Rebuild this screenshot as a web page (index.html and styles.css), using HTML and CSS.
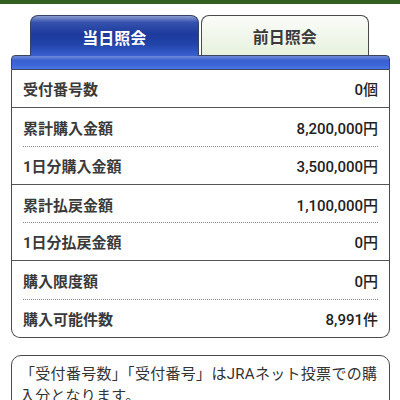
FILE: index.html
```html
<!DOCTYPE html>
<html lang="ja">
<head>
<meta charset="utf-8">
<link rel="stylesheet" href="styles.css">
</head>
<body>
<div class="topbar"></div>
<div class="page">
  <div class="tabs">
    <div class="tab active">当日照会</div>
    <div class="tab">前日照会</div>
  </div>
  <div class="bar"></div>
  <div class="table">
    <div class="row solid"><span class="label">受付番号数</span><span class="value">0個</span></div>
    <div class="row dotted"><span class="label">累計購入金額</span><span class="value">8,200,000円</span></div>
    <div class="row solid"><span class="label">1日分購入金額</span><span class="value">3,500,000円</span></div>
    <div class="row dotted"><span class="label">累計払戻金額</span><span class="value">1,100,000円</span></div>
    <div class="row solid"><span class="label">1日分払戻金額</span><span class="value">0円</span></div>
    <div class="row dotted"><span class="label">購入限度額</span><span class="value">0円</span></div>
    <div class="row"><span class="label">購入可能件数</span><span class="value">8,991件</span></div>
  </div>
  <div class="notice">「受付番号数」「受付番号」はJRAネット投票での購入分となります。</div>
</div>
</body>
</html>
```
FILE: styles.css
```css
html, body {
  margin: 0;
  padding: 0;
  background: #ffffff;
  font-family: Roboto, "Noto Sans CJK JP", sans-serif;
  color: #333;
}
.topbar {
  height: 4px;
  background: #335f22;
}
.page {
  padding: 0 10px 0 11px;
}
.tabs {
  display: flex;
  gap: 2px;
  padding: 0 21px 0 19px;
  margin-top: 11px;
  align-items: flex-end;
}
.tab {
  flex: 1;
  height: 40px;
  box-sizing: border-box;
  border: 1px solid #4a4a4a;
  border-bottom: none;
  border-radius: 8px 8px 0 0;
  display: flex;
  align-items: center;
  justify-content: center;
  padding-top: 1px;
  font-size: 16px;
  font-weight: bold;
  color: #3a3a3a;
  background: linear-gradient(#fbfcf9, #e7f2de);
}
.tab.active {
  height: 41px;
  margin-bottom: -1px;
  position: relative;
  z-index: 1;
  color: #ffffff;
  border-color: #34426a;
  background: linear-gradient(#8a9cd2 0%, #3552ad 16%, #1e3a9c 45%, #2143a8 70%, #3a60d0 100%);
}
.bar {
  height: 15px;
  box-sizing: border-box;
  border: 1px solid #3a4560;
  border-radius: 4px 4px 0 0;
  background: linear-gradient(#6f8cda 0%, #3a60d0 35%, #3d66d8 70%, #4a78e6 100%);
}
.table {
  border: 1px solid #4a4a4a;
  border-top: none;
  border-radius: 0 0 9px 9px;
  background: #fff;
}
.row {
  height: 37.3px;
  display: flex;
  align-items: center;
  justify-content: space-between;
  padding: 0 11px 0 11px;
  position: relative;
}
.row.solid {
  border-bottom: 1px solid #555;
}
.row.dotted {
  height: 38.3px;
  background-image: linear-gradient(to right, #888 50%, transparent 50%);
  background-size: 2px 1px;
  background-repeat: repeat-x;
  background-position: 0 100%;
  background-origin: content-box;
  background-clip: content-box;
}
.label {
  font-size: 15px;
  font-weight: bold;
  color: #3a3a3a;
}
.value {
  font-size: 15px;
  font-weight: 500;
  color: #222;
}
.notice {
  margin-top: 17px;
  border: 1px solid #4a4a4a;
  border-radius: 10px;
  padding: 7px 10px 10px 8px;
  font-size: 15px;
  letter-spacing: 0.3px;
  line-height: 22px;
  color: #333;
}
```
